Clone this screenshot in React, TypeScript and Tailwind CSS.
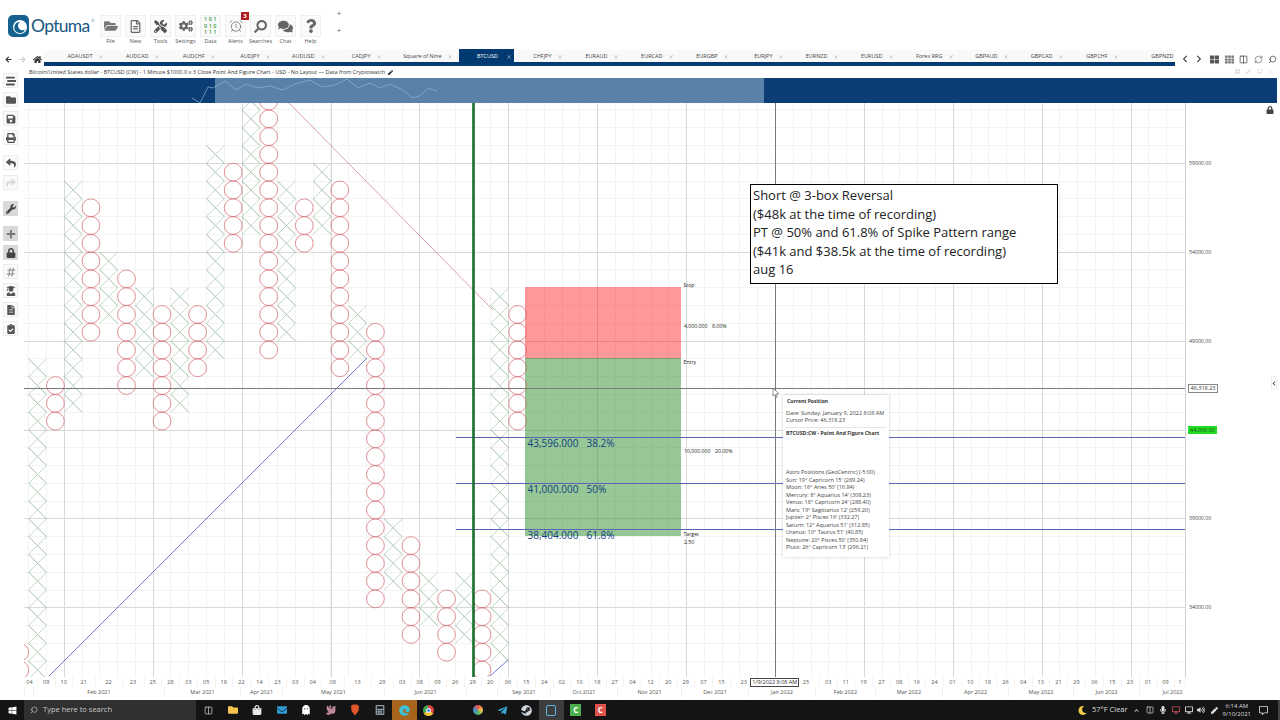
import React from "react";
import {
  FaFolderOpen, FaRegFileAlt, FaTools, FaCogs, FaSearch, FaComments, FaQuestion, FaSave, FaPrint,
  FaReply, FaShare, FaWrench, FaPlus, FaLock, FaHashtag, FaUserGraduate, FaFileAlt, FaClipboardCheck,
  FaStream, FaFolder, FaArrowLeft, FaArrowRight, FaHome, FaChevronLeft, FaChevronRight, FaTh, FaThLarge,
  FaWindows, FaShoppingBag, FaEnvelope, FaCalculator, FaTelegramPlane, FaSteam, FaMoon,
  FaMicrophone, FaPen, FaRegCommentAlt, FaChevronUp, FaVolumeUp, FaDesktop, FaEdge, FaGhost, FaDove,
} from "react-icons/fa";
import { AlarmClock, RefreshCw, Search, X as XIcon, Columns2 } from "lucide-react";

const BOX = 17.78;
const colX = (k: number) => 28.7 + BOX * k;
const rowY = (r: number) => 163.3 + BOX * r;
const crisp = (v: number) => Math.floor(v) + 0.5;

// [column, first row, last row]
const xCols = [
  [0, 11, 29], [2, 1, 13], [4, 5, 8], [6, 7, 11], [8, 7, 13], [10, -1, 10], [12, -4, 3], [14, 1, 9],
  [16, 0, 3], [18, 8, 10], [20, 20, 23], [22, 23, 25], [24, 23, 26], [26, 7, 27],
];
const oCols = [
  [-1, 27, 29], [1, 12, 14], [3, 2, 9], [5, 6, 12], [7, 8, 14], [9, 8, 11], [11, 0, 4], [13, -4, 10],
  [15, 2, 4], [17, 1, 11], [19, 9, 24], [21, 21, 26], [23, 24, 27], [25, 24, 28], [27, 8, 14],
];

const range = (a: number, b: number) => Array.from({ length: b - a + 1 }, (_, i) => a + i);

const Chart = () => {
  const minorV = range(0, 64).map((i) => crisp(colX(i)));
  const minorH = range(-3, 28).map((r) => crisp(rowY(r)));
  const majorV = range(0, 12).map((i) => crisp(64.3 + 88.9 * i));
  const majorH = [0, 1, 2, 3, 4, 5].map((i) => crisp(163.3 + 88.9 * i));
  const prices = ["59000.00", "54000.00", "49000.00", "", "39000.00", "34000.00"];

  return (
    <svg viewBox="24 103 1256 574" className="absolute inset-0 w-[1256px] h-[574px]">
      <defs>
        <clipPath id="plot">
          <rect x="24" y="103" width="1161" height="574" />
        </clipPath>
      </defs>
      {minorV.map((x) => <line key={x} x1={x} x2={x} y1="103" y2="677" stroke="#f3f3f3" strokeWidth="1" />)}
      {minorH.map((y) => <line key={y} x1="24" x2="1185" y1={y} y2={y} stroke="#f3f3f3" strokeWidth="1" />)}
      {majorV.map((x) => <line key={x} x1={x} x2={x} y1="103" y2="677" stroke="#d9d9d9" strokeWidth="1" />)}
      {majorH.map((y) => <line key={y} x1="24" x2="1185" y1={y} y2={y} stroke="#d9d9d9" strokeWidth="1" />)}
      <line x1="1185.5" x2="1185.5" y1="103" y2="677" stroke="#cfcfcf" strokeWidth="1" />

      <rect x="525" y="287" width="156" height="71" fill="#ff0000" fillOpacity="0.4" />
      <rect x="525" y="358" width="156" height="178" fill="#309030" fillOpacity="0.5" />
      <line x1="525" x2="681" y1="358.5" y2="358.5" stroke="#6f9f6f" strokeWidth="1" />

      <g clipPath="url(#plot)">
        {xCols.map(([k, a, b]) =>
          range(a, b).map((r) => (
            <g key={`${k}-${r}`}>
              <line x1={colX(k)} y1={rowY(r)} x2={colX(k + 1)} y2={rowY(r + 1)} stroke="#7ba587" strokeWidth="0.7" />
              <line x1={colX(k + 1)} y1={rowY(r)} x2={colX(k)} y2={rowY(r + 1)} stroke="#b2cfb8" strokeWidth="0.8" />
            </g>
          ))
        )}
        {oCols.map(([k, a, b]) =>
          range(a, b).map((r) => (
            <circle key={`${k}-${r}`} cx={colX(k) + BOX / 2} cy={rowY(r) + BOX / 2} r={BOX / 2} fill="none" stroke="#d4666f" strokeWidth="0.7" />
          ))
        )}
        <line x1="289" y1="103" x2="493" y2="310" stroke="#d58a92" strokeWidth="0.8" />
        <line x1="49" y1="676" x2="367" y2="358" stroke="#4f59d0" strokeWidth="0.8" />
        <line x1="490" y1="676" x2="508" y2="660" stroke="#4f59d0" strokeWidth="0.8" />
      </g>

      {[437.5, 483.5, 529.5].map((y) => <line key={y} x1="456" x2="1185" y1={y} y2={y} stroke="#5c62b4" strokeWidth="1" />)}
      <line x1="24" x2="1185" y1="388.5" y2="388.5" stroke="#7a7a7a" strokeWidth="1" />
      <line x1="775.5" x2="775.5" y1="103" y2="677" stroke="#7a7a7a" strokeWidth="1" />
      <line x1="473.5" x2="473.5" y1="103" y2="677" stroke="#17702a" strokeWidth="2.6" />

      <g fontSize="10" fill="#12407e">
        <text x="527.5" y="446.5">43,596.000</text>
        <text x="586.5" y="446.5">38.2%</text>
        <text x="527.5" y="492.5">41,000.000</text>
        <text x="586.5" y="492.5">50%</text>
        <text x="527.5" y="538.5">38,404.000</text>
        <text x="586.5" y="538.5">61.8%</text>
      </g>
      <g fontSize="5.2" fill="#222">
        <text x="683.5" y="287">Stop</text>
        <text x="684" y="327.8">4,000.000</text>
        <text x="712" y="327.8">8.00%</text>
        <text x="683.5" y="364">Entry</text>
        <text x="684" y="452.6">10,000.000</text>
        <text x="715" y="452.6">20.00%</text>
        <text x="683.5" y="536">Target</text>
        <text x="684" y="544">2.50</text>
      </g>
      <g fontSize="5.2" fill="#444">
        {prices.map((p, i) => p && <text key={p} x="1189" y={majorH[i] + 1.8}>{p}</text>)}
      </g>

      <path d="M773 388 l0 8 l2 -1.6 l1.4 3 l1.2 -.6 l-1.4 -2.9 l2.6 -.2 z" fill="#fff" stroke="#666" strokeWidth="0.7" />
    </svg>
  );
};

const Tooltip = () => (
  <div className="absolute left-[759px] top-[292px] w-[106px] h-[162px] bg-white shadow-[0_0_3px_rgba(0,0,0,0.2)] px-[3px] pt-[3px] text-[5.5px] leading-[7.5px] text-[#444] whitespace-nowrap">
    <p className="font-bold pl-[1px] text-[#333] text-[5px]">Current Position</p>
    <p className="mt-[4px]">Date: Sunday, January 9, 2022 8:08 AM</p>
    <p>Cursor Price: 46,318.23</p>
    <p className="mt-[2px] pt-[2px] border-t border-[#e5e5e5] font-bold text-[#333] text-[5.2px]">BTCUSD:CW - Point And Figure Chart</p>
    <div className="mt-[32px]">
      <p>Astro Positions (GeoCentric) (-5:00)</p>
      <p>Sun: 19° Capricorn 15' (289.24)</p>
      <p>Moon: 16° Aries 50' (16.84)</p>
      <p>Mercury: 8° Aquarius 14' (308.23)</p>
      <p>Venus: 18° Capricorn 24' (288.40)</p>
      <p>Mars: 19° Sagittarius 12' (259.20)</p>
      <p>Jupiter: 2° Pisces 16' (332.27)</p>
      <p>Saturn: 12° Aquarius 51' (312.85)</p>
      <p>Uranus: 10° Taurus 51' (40.85)</p>
      <p>Neptune: 20° Pisces 50' (350.84)</p>
      <p>Pluto: 26° Capricorn 13' (296.21)</p>
    </div>
  </div>
);

const Note = () => (
  <div className="absolute left-[726px] top-[81px] w-[308px] h-[100px] bg-white border border-black px-[2px] pt-[1px] text-[13px] leading-[18.5px] text-[#222]">
    <p>Short @ 3-box Reversal</p>
    <p>($48k at the time of recording)</p>
    <p>PT @ 50% and 61.8% of Spike Pattern range</p>
    <p>($41k and $38.5k at the time of recording)</p>
    <p>aug 16</p>
  </div>
);

const toolbar = [
  { label: "File", icon: <FaFolderOpen className="text-[14px] text-[#777]" /> },
  { label: "New", icon: <FaRegFileAlt className="text-[13px] text-[#666]" /> },
  { label: "Tools", icon: <FaTools className="text-[13px] text-[#555]" /> },
  { label: "Settings", icon: <FaCogs className="text-[14px] text-[#666]" /> },
  {
    label: "Data",
    icon: (
      <div className="text-[5.5px] leading-[6.5px] font-semibold text-[#3d9a4d] text-center tracking-[1.5px] pl-[1px]">
        <p>101</p>
        <p>010</p>
        <p>111</p>
      </div>
    ),
  },
  { label: "Alerts", icon: <AlarmClock size={14} strokeWidth={1.3} className="text-[#666]" />, badge: "3" },
  { label: "Searches", icon: <FaSearch className="text-[13px] text-[#666] -scale-x-100" /> },
  { label: "Chat", icon: <FaComments className="text-[15px] text-[#666]" /> },
  { label: "Help", icon: <FaQuestion className="text-[14px] text-[#666]" /> },
];

const Logo = () => (
  <div className="flex items-center gap-[2px] w-[90px] ml-[8px] h-[22px]">
    <svg viewBox="0 0 21 22" className="w-[21px] h-[22px] shrink-0">
      <rect x="0" y="0" width="21" height="22" rx="5" fill="#14608f" />
      <circle cx="12" cy="12" r="7" fill="#fff" />
      <path d="M12 7 a5.5 5.5 0 1 0 5 7.5 a4 4 0 0 1 -5 -7.5 z" fill="#14608f" />
    </svg>
    <span className="font-['Lato',sans-serif] text-[17.5px] leading-none text-[#17577f] tracking-[-0.7px]">Optuma</span>
    <span className="text-[3px] text-[#17577f] -mt-[10px]">®</span>
  </div>
);

const Header = () => (
  <div className="h-[50px] flex shrink-0 pt-[15px]">
    <Logo />
    <div className="flex">
      {toolbar.map((t) => (
        <div key={t.label} className="relative w-[25px] flex flex-col items-center">
          <div className="w-[21px] h-[22px] flex items-center justify-center bg-[#fafafa] border border-[#efefef]">{t.icon}</div>
          <span className="text-[5.5px] leading-[8px] text-[#555] whitespace-nowrap">{t.label}</span>
          {t.badge && (
            <span className="absolute -top-[3px] right-[-1px] w-[8px] h-[8px] bg-[#b01c24] text-white text-[6px] leading-[8px] font-bold text-center">{t.badge}</span>
          )}
        </div>
      ))}
    </div>
    <div className="ml-[14px] -mt-[5px] flex flex-col gap-[10px] text-[7px] leading-[7px] text-[#555]">
      <span>+</span>
      <span>+</span>
    </div>
  </div>
);

const tabs: [string, number][] = [
  ["ADAUSDT", 66], ["AUDCAD", 56], ["AUDCHF", 56], ["AUDJPY", 55], ["AUDUSD", 55], ["CADJPY", 56], ["Square of Nine", 71],
  ["BTCUSD", 55], ["CHFJPY", 55], ["EURAUD", 56], ["EURCAD", 55], ["EURGBP", 55], ["EURJPY", 55], ["EURNZD", 55],
  ["EURUSD", 55], ["Forex RRG", 60], ["GBPAUD", 55], ["GBPCAD", 55], ["GBPCHF", 55], ["GBPNZD", 50],
];

const TabRow = () => (
  <div className="h-[16px] flex shrink-0">
    <div className="w-[44px] flex items-center pl-[5px] pt-[2px] gap-[7px]">
      <FaArrowLeft className="text-[7px] text-[#333]" />
      <FaArrowRight className="text-[7px] text-[#ccc]" />
      <FaHome className="text-[9px] text-[#333]" />
    </div>
    <div className="w-[1131px] flex flex-col">
      <div className="h-[12px] flex bg-[#f9f9f9]">
        {tabs.map(([name, w]) => {
          const active = name === "BTCUSD";
          const last = name === "GBPNZD";
          return (
            <div
              key={name}
              style={{ width: w }}
              className={
                active
                  ? "flex items-center justify-end gap-[8px] pr-[2px] pt-[2px] h-[13px] -mt-[1px] bg-[#003a70] text-white shrink-0"
                  : "flex items-center justify-end gap-[5px] pr-[6.5px] pt-[2px] h-[12px] text-[#444] shrink-0"
              }
            >
              <span className={last ? "text-[5.5px] leading-none whitespace-nowrap -mr-[5px]" : "text-[5.5px] leading-none whitespace-nowrap"}>{name}</span>
              {!last && <XIcon size={6} strokeWidth={2.5} className={active ? "text-[#9db5cf]" : "text-[#b8b8b8]"} />}
            </div>
          );
        })}
      </div>
      <div className="h-[4px] bg-[#003a70]" />
    </div>
    <div className="flex-1 flex items-center pl-[6px] gap-[5.5px] text-[#444] pt-[2px]">
      <FaChevronLeft className="text-[8px]" />
      <FaChevronRight className="text-[8px]" />
      <FaThLarge className="text-[9px] ml-[2px] text-[#555]" />
      <FaTh className="text-[9px] text-[#777]" />
      <Columns2 size={9} />
      <RefreshCw size={9} className="text-[#777]" />
      <Search size={9} className="-scale-x-100" />
    </div>
  </div>
);

const sideTile = "w-[15px] h-[15px] flex items-center justify-center border border-[#ececec] bg-[#fbfbfb] text-[10px] text-[#555]";
const sideOn = "w-[15px] h-[15px] flex items-center justify-center bg-[#d9d9d9] text-[10px] text-[#444]";

const Sidebar = () => (
  <div className="w-[24px] shrink-0 flex flex-col pl-[3px]">
    <div className="mt-[7px] flex flex-col gap-[4px]">
      <div className={sideTile}><FaStream /></div>
      <div className={sideTile}><FaFolder /></div>
      <div className={sideTile}><FaSave /></div>
      <div className={sideTile}><FaPrint /></div>
    </div>
    <div className="mt-[10px] flex flex-col gap-[5px]">
      <div className={sideTile}><FaReply /></div>
      <div className={sideTile}><FaShare className="text-[#dcdcdc]" /></div>
    </div>
    <div className="mt-[11px]">
      <div className={sideOn}><FaWrench /></div>
    </div>
    <div className="mt-[10px] flex flex-col gap-[4px]">
      <div className={sideOn}><FaPlus className="text-[#777]" /></div>
      <div className={sideOn}><FaLock /></div>
      <div className={sideTile}><FaHashtag className="text-[#999]" /></div>
      <div className={sideTile}><FaUserGraduate /></div>
      <div className={sideTile}><FaFileAlt /></div>
      <div className={sideTile}><FaClipboardCheck /></div>
    </div>
  </div>
);

const wave =
  "192,98 200,103 208,87 213,88 225,81 236,90 246,84 258,88 270,86 283,90 295,84 310,80 322,87 335,85 347,79 358,88 370,83 380,88 390,84 403,90 412,98 420,96 428,88 437,91";

const Navigator = () => (
  <div className="relative h-[25px] mr-[3px] bg-[#0c3e75] shrink-0 overflow-hidden">
    <div className="ml-[191px] w-[549px] h-full bg-[#5a82a8]" />
    <svg viewBox="24 78 1253 25" className="absolute inset-0 w-[1253px] h-[25px]">
      <polyline points={wave} fill="none" stroke="#8fb4d4" strokeWidth="0.7" />
    </svg>
  </div>
);

const dates: [string, number][] = [
  ["04", 29], ["09", 47], ["10", 64], ["21", 82], ["22", 109], ["23", 136], ["25", 153], ["28", 171], ["03", 189], ["05", 207],
  ["18", 224], ["22", 242], ["14", 260], ["23", 278], ["03", 296], ["04", 313], ["08", 331], ["13", 358], ["29", 385], ["03", 403],
  ["08", 420], ["09", 438], ["26", 456], ["29", 473], ["20", 491], ["06", 508], ["15", 527], ["24", 545], ["02", 562], ["10", 580],
  ["18", 598], ["27", 615], ["04", 633], ["12", 651], ["20", 669], ["29", 686], ["07", 704], ["15", 722], ["23", 740],
  ["1/9/2022 8:08 AM", 775], ["25", 811], ["03", 829], ["11", 846], ["19", 864], ["27", 882], ["08", 900], ["16", 917], ["24", 935],
  ["01", 953], ["10", 971], ["18", 988], ["26", 1006], ["04", 1024], ["13", 1041], ["21", 1059], ["29", 1077], ["06", 1095],
  ["15", 1113], ["23", 1130], ["01", 1149], ["09", 1166], ["1", 1183],
];

const months: [string, number, number][] = [
  ["", 24, 33], ["Feb 2021", 33, 164], ["Mar 2021", 164, 240], ["Apr 2021", 240, 282], ["May 2021", 282, 384], ["Jun 2021", 384, 466],
  ["", 466, 497], ["Sep 2021", 497, 550], ["Oct 2021", 550, 617], ["Nov 2021", 617, 681], ["Dec 2021", 681, 748], ["Jan 2022", 748, 815],
  ["Feb 2022", 815, 875], ["Mar 2022", 875, 942], ["Apr 2022", 942, 1008], ["May 2022", 1008, 1073], ["Jun 2022", 1073, 1139], ["Jul 2022", 1139, 1205],
];

const DateAxis = () => (
  <div className="h-[23px] shrink-0 pl-[22px] text-[5.5px] text-[#555]">
    <div className="h-[10px] flex">
      {dates.map(([label, c], i) => {
        const left = i === 0 ? 22 : (c + dates[i - 1][1]) / 2;
        const right = i === dates.length - 1 ? 1186 : (c + dates[i + 1][1]) / 2;
        const cursor = label.includes("AM");
        return (
          <div key={i} style={{ width: right - left }} className="h-full flex items-center justify-center shrink-0 border-r border-[#f3f3f3]">
            {cursor ? (
              <span className="border border-[#444] text-[#333] px-[1px] leading-[7px] whitespace-nowrap">{label}</span>
            ) : (
              label
            )}
          </div>
        );
      })}
    </div>
    <div className="h-[10px] flex pl-[2px]">
      {months.map(([label, a, b]) => (
        <div key={a} style={{ width: b - a }} className="h-full flex items-center justify-center shrink-0 border-l border-[#f0f0f0]">
          {label}
        </div>
      ))}
    </div>
  </div>
);

const Cell = ({ children, active }: { children: React.ReactNode; active?: "edge" | "cur" }) => (
  <div
    className={
      active === "edge"
        ? "w-[24.5px] h-full flex items-center justify-center bg-[#a8641c]"
        : active === "cur"
        ? "w-[24.5px] h-full flex items-center justify-center bg-[#3d3d3d]"
        : "w-[24.5px] h-full flex items-center justify-center"
    }
  >
    {children}
  </div>
);

const Taskbar = () => (
  <div className="h-[20px] shrink-0 bg-[#141414] flex items-center text-[#ddd] border-r-[2px] border-[#444]">
    <div className="w-[24px] h-full flex items-center justify-center">
      <FaWindows className="text-[9px] text-white" />
    </div>
    <div className="w-[172px] h-full bg-[#303030] flex items-center gap-[5px] pl-[6px] text-[7.5px] text-[#c8c8c8]">
      <Search size={8} className="-scale-x-100" />
      <span>Type here to search</span>
    </div>
    <Cell><Columns2 size={9} className="text-[#ccc]" /></Cell>
    <Cell><FaFolder className="text-[10px] text-[#f3c44e]" /></Cell>
    <Cell><FaShoppingBag className="text-[10px] text-[#e8e8e8]" /></Cell>
    <Cell><FaEnvelope className="text-[10px] text-[#2e9bd6]" /></Cell>
    <Cell><FaGhost className="text-[10px] text-white" /></Cell>
    <Cell><FaDove className="text-[10px] text-[#c08a9a]" /></Cell>
    <Cell>
      <svg viewBox="0 0 10 12" className="w-[10px] h-[12px]">
        <path d="M1 2 L3 0.5 L7 0.5 L9 2 L8.5 7 L5 11.5 L1.5 7 Z" fill="#e0562b" />
      </svg>
    </Cell>
    <Cell><FaCalculator className="text-[10px] text-[#8a9aa8]" /></Cell>
    <Cell active="edge"><FaEdge className="text-[11px] text-[#3bc4d8]" /></Cell>
    <Cell>
      <span className="w-[11px] h-[11px] rounded-full bg-[conic-gradient(#e0463c_0_33%,#f3c33c_33%_66%,#3da94f_66%_100%)] flex items-center justify-center">
        <span className="w-[5px] h-[5px] rounded-full bg-[#4a8ef0] border border-white" />
      </span>
    </Cell>
    <Cell><span className="text-[4px] text-[#3fae5a]">~~~</span></Cell>
    <Cell><span className="w-[10px] h-[10px] rounded-full bg-[conic-gradient(#e8524a,#f2c14a,#4ab56a,#4a90d9,#e8524a)]" /></Cell>
    <Cell><FaTelegramPlane className="text-[11px] text-[#39a6d8]" /></Cell>
    <Cell><FaSteam className="text-[11px] text-[#cfd8e0]" /></Cell>
    <Cell active="cur"><span className="w-[10px] h-[11px] rounded-[2px] border-[1.5px] border-[#5bb6e6]" /></Cell>
    <Cell><span className="w-[11px] h-[12px] bg-[#4cae4c] text-white text-[8px] leading-[12px] text-center font-bold">C</span></Cell>
    <Cell><span className="w-[11px] h-[12px] bg-[#e0524a] text-white text-[8px] leading-[12px] text-center font-bold">C</span></Cell>

    <div className="flex-1 flex items-center justify-end text-[7.5px]">
      <FaMoon className="text-[9px] text-[#f2c94c] mr-[5px]" />
      <span className="mr-[6px] whitespace-nowrap">57°F  Clear</span>
      <FaChevronUp className="text-[5px] mr-[7px]" />
      <Columns2 size={8} className="mr-[5px]" />
      <FaMicrophone className="text-[8px] mr-[5px]" />
      <FaDesktop className="text-[8px] mr-[5px] text-[#c05050]" />
      <FaDesktop className="text-[8px] mr-[4px]" />
      <FaVolumeUp className="text-[8px] mr-[6px]" />
      <FaPen className="text-[7px] mr-[5px]" />
      <div className="text-[6px] leading-[8px] text-center mr-[8px]">
        <p>6:14 AM</p>
        <p>9/10/2021</p>
      </div>
      <FaRegCommentAlt className="text-[9px] mr-[10px]" />
    </div>
  </div>
);

export default function App() {
  return (
    <div className="w-[1280px] h-[720px] flex flex-col overflow-hidden bg-white font-['Open_Sans',sans-serif]">
      <Header />
      <TabRow />
      <div className="flex-1 flex min-h-0">
        <Sidebar />
        <div className="flex-1 flex flex-col min-w-0">
          <div className="h-[12px] shrink-0 flex items-center pl-[5px] pr-[6px] gap-[3px] text-[5.5px] text-[#333]">
            <span className="whitespace-nowrap">
              Bitcoin/United States dollar - BTCUSD (CW) - 1 Minute $1000.0 x 3 Close Point And Figure Chart - USD - No Layout — Data from Cryptowatch
            </span>
            <FaPen className="text-[5px]" />
            <div className="ml-auto flex gap-[6px] text-[5px] text-[#ddd]">
              <FaThLarge />
              <FaPen />
              <FaDesktop />
              <XIcon size={6} />
            </div>
          </div>
          <Navigator />
          <div className="relative flex-1 min-h-0">
            <Chart />
            <Note />
            <Tooltip />
            <span className="absolute left-[1164px] top-[281px] w-[30px] h-[9px] bg-white border border-[#888] text-[5.5px] leading-[7px] text-center text-[#333]">46,318.23</span>
            <span className="absolute left-[1164px] top-[323px] w-[29px] h-[8px] bg-[#25dc25] text-[5.5px] leading-[8px] text-center text-[#115511]">44,000.00</span>
            <FaLock className="absolute left-[1242px] top-[3px] text-[8px] text-[#444]" />
            <div className="absolute right-[3px] top-[273px] w-[6px] h-[14px] bg-white border border-[#eee] flex items-center justify-center">
              <FaChevronLeft className="text-[5px] text-[#333]" />
            </div>
          </div>
        </div>
      </div>
      <DateAxis />
      <Taskbar />
    </div>
  );
}
